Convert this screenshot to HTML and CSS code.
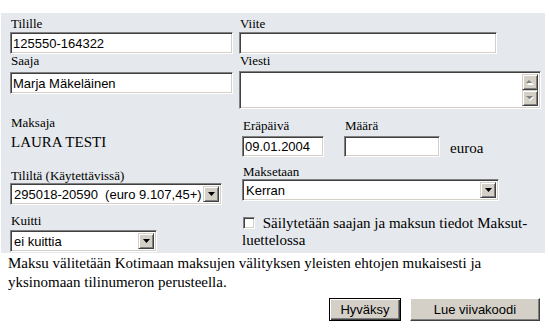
FILE: index.html
```html
<!DOCTYPE html>
<html lang="fi">
  <head>
    <meta charset="UTF-8">
    <meta name="viewport" content="width=device-width, initial-scale=1.0">
    <title>Maksu</title>
    <link rel="stylesheet" href="styles.css">
  </head>
  <body>
    <form class="payment" onsubmit="return false">
      <div class="panel">
        <!-- rivi 1 -->
        <div class="field">
          <label class="lbl" for="tilille">Tilille</label>
          <input class="text" id="tilille" type="text" value="125550-164322">
        </div>
        <div class="field">
          <label class="lbl" for="viite">Viite</label>
          <input class="text text-viite" id="viite" type="text">
        </div>

        <!-- rivi 2 -->
        <div class="field">
          <label class="lbl" for="saaja">Saaja</label>
          <input class="text text-saaja" id="saaja" type="text" value="Marja Mäkeläinen">
        </div>
        <div class="field">
          <label class="lbl" for="viesti">Viesti</label>
          <div class="memo">
            <textarea id="viesti"></textarea>
            <div class="scrollbar">
              <span class="scroll-btn">
                <svg width="8" height="5" viewBox="0 0 8 5"><polygon points="4,1 8,5 1,5" fill="#fff"/><polygon points="3,0 6,3 0,3" fill="#808080"/></svg>
              </span>
              <span class="scroll-btn">
                <svg width="8" height="5" viewBox="0 0 8 5"><polygon points="1,1 8,1 4,5" fill="#fff"/><polygon points="0,0 7,0 3.5,3.5" fill="#808080"/></svg>
              </span>
            </div>
          </div>
        </div>

        <!-- rivi 3 -->
        <div class="field payer">
          <span class="lbl">Maksaja</span>
          <span class="payer-name">LAURA TESTI</span>
        </div>
        <div class="field-row indent">
          <div class="field due">
            <label class="lbl" for="erapaiva">Eräpäivä</label>
            <input class="text text-small" id="erapaiva" type="text" value="09.01.2004">
          </div>
          <div class="field amount">
            <label class="lbl" for="maara">Määrä</label>
            <input class="text text-small" id="maara" type="text">
          </div>
          <span class="unit">euroa</span>
        </div>

        <!-- rivi 4 -->
        <div class="field from">
          <label class="lbl" for="tililta">Tililtä (Käytettävissä)</label>
          <div class="select select-from">
            <select id="tililta">
              <option>295018-20590&nbsp;&nbsp;(euro 9.107,45+)</option>
            </select>
            <span class="select-btn"><svg width="7" height="4" viewBox="0 0 7 4"><polygon points="0,0 7,0 3.5,4" fill="#000"/></svg></span>
          </div>
        </div>
        <div class="field when indent">
          <label class="lbl" for="maksetaan">Maksetaan</label>
          <div class="select select-when">
            <select id="maksetaan">
              <option>Kerran</option>
            </select>
            <span class="select-btn"><svg width="7" height="4" viewBox="0 0 7 4"><polygon points="0,0 7,0 3.5,4" fill="#000"/></svg></span>
          </div>
        </div>

        <!-- rivi 5 -->
        <div class="field receipt">
          <label class="lbl" for="kuitti">Kuitti</label>
          <div class="select select-receipt">
            <select id="kuitti">
              <option>ei kuittia</option>
            </select>
            <span class="select-btn"><svg width="7" height="4" viewBox="0 0 7 4"><polygon points="0,0 7,0 3.5,4" fill="#000"/></svg></span>
          </div>
        </div>
        <div class="keep indent">
          <label><input class="check" type="checkbox"> Säilytetään saajan ja maksun tiedot Maksut-luettelossa</label>
        </div>
      </div>

      <p class="terms">Maksu välitetään Kotimaan maksujen välityksen yleisten ehtojen mukaisesti ja yksinomaan tilinumeron perusteella.</p>

      <div class="actions">
        <button class="btn btn-default">Hyväksy</button>
        <button class="btn btn-wide">Lue viivakoodi</button>
      </div>
    </form>
  </body>
</html>
```

FILE: styles.css
```css
body {
  margin: 0;
  font-family: "Liberation Serif", Tinos, "Times New Roman", "DejaVu Serif", serif;
  color: #000;
  background-color: #fff;
}

.panel {
  margin: 13px 4px 0 1px;
  padding: 4px 4px 1px 9px;
  background-color: #e5e9ed;
  display: grid;
  grid-template-columns: 223px 1fr;
  column-gap: 6px;
  align-items: start;
}

.field {
  display: flex;
  flex-direction: column;
  align-items: flex-start;
}

.lbl {
  display: block;
  font-family: "Liberation Serif", Tinos, "Times New Roman", "DejaVu Serif", serif;
  font-size: 13px;
  line-height: 14px;
  padding-left: 1px;
}

/* windowsin upotettu kehys */
.text, .select, .memo, .check {
  box-sizing: border-box;
  border: 1px solid;
  border-color: #808080 #fff #fff #808080;
  box-shadow: inset 1px 1px 0 #404040, inset -1px -1px 0 #d4d0c8;
  background-color: #fff;
}

.text {
  height: 22px;
  width: 223px;
  margin: 1px 0 0;
  padding: 0 2px;
  font-family: "Liberation Sans", Arial, sans-serif;
  font-size: 13px;
  color: #000;
}

.text:focus, .memo textarea:focus, .select select:focus {
  outline: none;
}

.text-viite {
  width: 258px;
}

.text-saaja {
  margin-top: 4px;
}

.memo {
  display: flex;
  width: 302px;
  height: 38px;
  margin-top: 3px;
  padding: 2px;
}

.memo textarea {
  flex: 1;
  border: none;
  resize: none;
  overflow: hidden;
  padding: 1px;
  font-family: "Liberation Sans", Arial, sans-serif;
  font-size: 13px;
}

.scrollbar {
  display: flex;
  flex-direction: column;
  width: 16px;
}

.scroll-btn, .select-btn {
  box-sizing: border-box;
  display: flex;
  align-items: center;
  justify-content: center;
  background-color: #d4d0c8;
  border: 1px solid;
  border-color: #d4d0c8 #404040 #404040 #d4d0c8;
  box-shadow: inset 1px 1px 0 #fff, inset -1px -1px 0 #808080;
}

.scroll-btn {
  height: 17px;
}

/* rivi 3 */
.payer {
  margin-top: 7px;
}

.payer-name {
  margin-top: 3px;
  padding-left: 1px;
  font-size: 15px;
  line-height: 18px;
}

.field-row {
  display: flex;
  align-items: flex-end;
  margin-top: 10px;
}

.indent {
  padding-left: 3px;
}

.text-small {
  width: 82px;
  height: 21px;
  margin-top: 3px;
}

.amount {
  margin-left: 20px;
}

.amount .text-small {
  width: 96px;
}

.unit {
  margin-left: 10px;
  font-size: 15px;
  line-height: 18px;
}

/* valintalistat */
.select {
  display: flex;
  height: 22px;
  padding: 2px;
}

.select select {
  flex: 1;
  min-width: 0;
  appearance: none;
  -webkit-appearance: none;
  border: none;
  background: transparent;
  padding: 0 1px;
  font-family: "Liberation Sans", Arial, sans-serif;
  font-size: 13px;
  color: #000;
}

.select-btn {
  width: 16px;
}

.from {
  margin-top: 12px;
}

.select-from {
  width: 212px;
}

.when {
  margin-top: 8px;
}

.select-when {
  width: 257px;
}

.receipt {
  margin-top: 9px;
}

.select-receipt {
  width: 147px;
  margin-top: 2px;
}

.keep {
  margin-top: 10px;
  font-size: 15px;
  line-height: 17px;
}

.check {
  appearance: none;
  -webkit-appearance: none;
  width: 12px;
  height: 12px;
  margin: 0 4px 0 1px;
  vertical-align: -1px;
}

/* alaosa */
.terms {
  margin: 1px 0 0 8px;
  font-size: 15px;
  line-height: 19px;
}

.actions {
  display: flex;
  justify-content: flex-end;
  gap: 9px;
  margin-top: 6px;
  padding-right: 9px;
}

.btn {
  box-sizing: border-box;
  height: 23px;
  padding: 0;
  background-color: #d4d0c8;
  border: 1px solid;
  border-color: #fff #404040 #404040 #fff;
  box-shadow: inset -1px -1px 0 #808080;
  font-family: "Liberation Sans", Arial, sans-serif;
  font-size: 13px;
  color: #000;
  cursor: pointer;
}

.btn-default {
  width: 72px;
  border-color: #000;
  box-shadow: inset 1px 1px 0 #fff, inset -1px -1px 0 #404040, inset -2px -2px 0 #808080;
}

.btn-wide {
  width: 130px;
}
```
